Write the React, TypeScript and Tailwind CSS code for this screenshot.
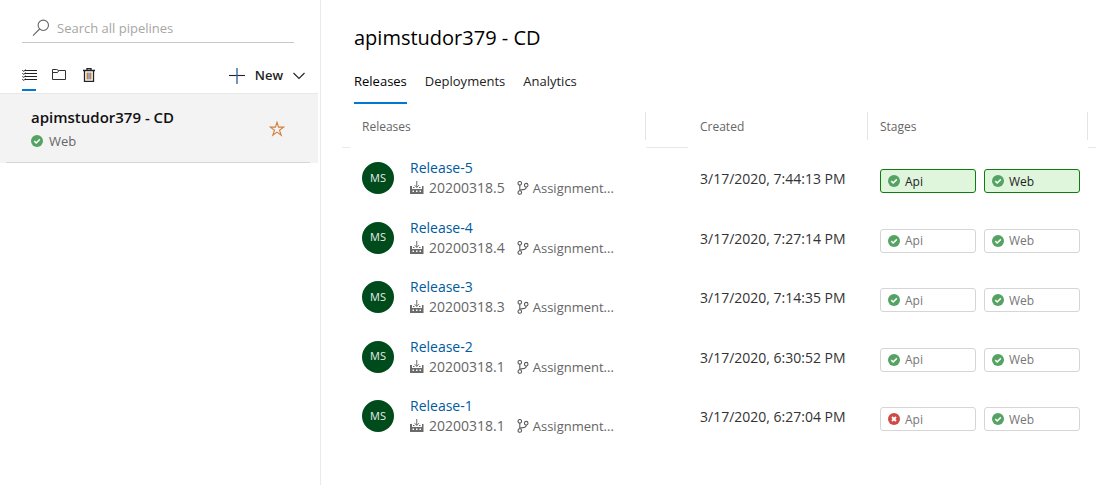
import React from "react";

type Status = "success" | "failed";

const releases: { name: string; build: string; created: string; api: Status; current?: boolean }[] = [
  { name: "Release-5", build: "20200318.5", created: "3/17/2020, 7:44:13 PM", api: "success", current: true },
  { name: "Release-4", build: "20200318.4", created: "3/17/2020, 7:27:14 PM", api: "success" },
  { name: "Release-3", build: "20200318.3", created: "3/17/2020, 7:14:35 PM", api: "success" },
  { name: "Release-2", build: "20200318.1", created: "3/17/2020, 6:30:52 PM", api: "success" },
  { name: "Release-1", build: "20200318.1", created: "3/17/2020, 6:27:04 PM", api: "failed" },
];

function StatusIcon({ status }: { status: Status }) {
  return (
    <svg viewBox="0 0 12 12" className="size-3 shrink-0" fill="none" stroke="#fff" aria-hidden="true">
      <circle cx="6" cy="6" r="6" stroke="none" fill={status === "success" ? "#55a362" : "#cd4a45"} />
      {status === "success" ? (
        <path d="M3.3 6.1 5.2 8 8.8 4.4" strokeWidth="1.5" />
      ) : (
        <path d="m4 4 4 4M8 4 4 8" strokeWidth="1.9" />
      )}
    </svg>
  );
}

function SearchIcon() {
  return (
    <svg viewBox="0 0 18 18" className="size-[18px] shrink-0" fill="none" stroke="#666" strokeWidth="1.1" aria-hidden="true">
      <circle cx="11.3" cy="7.3" r="5.2" />
      <path d="M7.6 11 1 17.6" />
    </svg>
  );
}

function ListIcon() {
  return (
    <svg viewBox="0 0 16 12" className="h-3 w-4" fill="none" stroke="#222" aria-hidden="true">
      <path d="M3 1.5h12M3 4.5h12M3 7.5h12M3 10.5h12" strokeWidth="1.1" />
      <path d="m.3 1.3 1.4 1L4 .7M.3 4.3l1.4 1L4 3.7M.3 7.3l1.4 1L4 6.7M.3 10.3l1.4 1L4 9.7" />
    </svg>
  );
}

function FolderIcon() {
  return (
    <svg viewBox="0 0 16 12" className="h-3 w-4" fill="none" stroke="#333" aria-hidden="true">
      <path d="M1.5 10.5v-10h4.3l1.7 1h7v9zM1.5 3.5h5l1.5-2" />
    </svg>
  );
}

function TrashIcon() {
  return (
    <svg viewBox="0 0 12 14" className="h-3.5 w-3" fill="none" stroke="#222" aria-hidden="true">
      <path d="M0 2.5h12M4 2.5V.5h4v2M1.5 2.5v11h9v-11" strokeWidth="1.3" />
      <path d="M4.2 4.5v7" stroke="#b5651d" strokeWidth="1.2" />
      <path d="M6 4.5v7" stroke="#334a6b" />
      <path d="M7.8 4.5v7" stroke="#b5651d" strokeWidth="1.2" />
    </svg>
  );
}

function PlusIcon() {
  return (
    <svg viewBox="0 0 16 16" className="size-4" fill="none" aria-hidden="true">
      <path d="M0 7.5h16" stroke="#222" strokeWidth="1.1" />
      <path d="M8 0v16" stroke="#36699b" strokeWidth="1.4" />
    </svg>
  );
}

function ChevronIcon() {
  return (
    <svg viewBox="0 0 12 8" className="h-2 w-3" fill="none" stroke="#222" strokeWidth="1.1" aria-hidden="true">
      <path d="m.5 1 5.5 5.5L11.5 1" />
    </svg>
  );
}

function StarIcon() {
  return (
    <svg viewBox="0 0 16 16" className="size-4" fill="none" stroke="#d3803c" strokeWidth="1.1" aria-hidden="true">
      <path d="m8 1.2 1.5 4.9h5.2l-4.2 3.1 1.7 5L8 11.1l-4.2 3.1 1.7-5-4.2-3.1h5.2z" />
    </svg>
  );
}

function BuildIcon() {
  return (
    <svg viewBox="0 0 14 14" className="size-3.5 shrink-0" fill="none" aria-hidden="true">
      <path
        fill="#6b6b6b"
        fillRule="evenodd"
        d="M0 5h2v3h10V5h1.5v8H0zM2.5 9.5V11H4V9.5zm3.5 0V11h1.5V9.5zm3.5 0V11H11V9.5z"
      />
      <path d="M3 6h1.5v1H3zM9 6h1.5v1H9z" fill="#6b6b6b" />
      <path d="M6.75 0v6.4M4.6 4.2l2.15 2.2L8.9 4.2" stroke="#6b6b6b" />
    </svg>
  );
}

function BranchIcon() {
  return (
    <svg viewBox="0 0 12 14" className="h-3.5 w-3 shrink-0" fill="none" stroke="#5c5c5c" strokeWidth="1.1" aria-hidden="true">
      <circle cx="2.8" cy="2.3" r="1.8" />
      <circle cx="2.8" cy="11.5" r="1.8" />
      <circle cx="9.2" cy="4.2" r="1.8" />
      <path d="M2.8 4.1v5.6M9.2 6c0 2-1.7 2.6-3.4 2.6-1.7 0-3 .3-3 1.2" />
    </svg>
  );
}

function Stage({ name, status, current }: { name: string; status: Status; current?: boolean }) {
  return (
    <button
      type="button"
      className={
        current
          ? "flex h-6 w-24 items-center gap-[5px] rounded-[3px] border border-[#107c10] bg-[#dff6dd] px-[7px] text-xs text-[#222]"
          : "flex h-6 w-24 items-center gap-[5px] rounded-[3px] border border-[#d6d6d6] bg-white px-[7px] text-xs text-[#767676]"
      }
    >
      <StatusIcon status={status} />
      <span className="pt-px">{name}</span>
    </button>
  );
}

function HeaderLabel({ children }: { children: string }) {
  return <div className="mb-2 flex h-7 items-center border-r border-[#e4e4e4] pt-0.5 pl-3">{children}</div>;
}

function Sidebar() {
  return (
    <aside className="w-[321px] shrink-0 border-r border-[#eaeaea] pt-3">
      <label className="mr-[26px] ml-[22px] flex h-[31px] items-center gap-[7px] border-b border-[#c8c8c8] pl-2.5">
        <SearchIcon />
        <input
          type="text"
          aria-label="Search all pipelines"
          placeholder="Search all pipelines"
          className="min-w-0 flex-1 pt-1 text-[13px] outline-none placeholder:text-[#a6a6a6]"
        />
      </label>
      <div className="mt-4 mr-[15px] ml-[22px] flex h-8 items-stretch">
        <button type="button" aria-label="List view" className="mr-[15px] flex w-3.5 items-center border-b-2 border-[#0078d4] pt-0.5">
          <span className="shrink-0"><ListIcon /></span>
        </button>
        <button type="button" aria-label="Folders" className="mr-4"><FolderIcon /></button>
        <button type="button" aria-label="Delete"><TrashIcon /></button>
        <button type="button" className="ml-auto flex items-center gap-2.5 pt-px text-[13px] font-semibold text-[#222]">
          <PlusIcon />
          New
          <ChevronIcon />
        </button>
      </div>
      <div className="mt-0.5 mr-0.5 border-t border-[#e8e8e8] bg-[#f3f3f3]">
        <div className="mr-2 ml-1.5 flex h-[69px] items-center justify-between border-b border-[#d6d6d6] pt-0.5 pr-[25px] pl-[25px]">
          <div>
            <a href="#pipeline" className="block text-[15px] leading-6 font-semibold text-[#111]">apimstudor379 - CD</a>
            <div className="flex items-center gap-1.5 text-[13px] leading-6 text-[#666]">
              <StatusIcon status="success" />
              Web
            </div>
          </div>
          <button type="button" aria-label="Add to favorites"><StarIcon /></button>
        </div>
      </div>
    </aside>
  );
}

export default function App() {
  return (
    <div className="flex min-h-screen bg-white font-['Open_Sans','Noto_Sans',sans-serif] text-[#222]">
      <Sidebar />
      <main className="min-w-0 flex-1 pt-[22px] pr-[15px] pl-[21px]">
        <h1 className="pl-3 text-xl leading-8 font-medium text-black">apimstudor379 - CD</h1>
        <nav className="mt-2.5 flex gap-[18px] pl-3 text-[13px]">
          <a href="#releases" aria-current="page" className="h-10 border-b-2 border-[#0078d4] pt-2 font-medium text-black">
            Releases
          </a>
          <a href="#deployments" className="h-10 pt-2">Deployments</a>
          <a href="#analytics" className="h-10 pt-2">Analytics</a>
        </nav>
        <table className="mt-2 w-full table-fixed border-separate border-spacing-0">
          <colgroup>
            <col className="w-2" />
            <col />
            <col className="w-[42px]" />
            <col className="w-[180px]" />
            <col className="w-[220px]" />
            <col className="w-2" />
          </colgroup>
          <thead className="text-left text-xs text-[#666]">
            <tr className="h-9">
              <td className="border-b border-[#e8e8e8]" />
              <th scope="col" className="p-0 font-normal"><HeaderLabel>Releases</HeaderLabel></th>
              <td className="border-b border-[#e8e8e8]" />
              <th scope="col" className="p-0 font-normal"><HeaderLabel>Created</HeaderLabel></th>
              <th scope="col" className="p-0 font-normal"><HeaderLabel>Stages</HeaderLabel></th>
              <td className="border-b border-[#e8e8e8]" />
            </tr>
          </thead>
          <tbody>
            {releases.map((r) => (
              <tr key={r.name} className="odd:h-[60px] even:h-[59px]">
                <td />
                <td className="p-0 pl-3">
                  <div className="flex items-center gap-4">
                    <span className="flex size-8 shrink-0 items-center justify-center rounded-full bg-[#004b1c] text-[11px] text-[#e6eee8]">
                      MS
                    </span>
                    <div>
                      <a href={`#${r.name}`} className="block text-sm leading-5 text-[#005a9e]">{r.name}</a>
                      <div className="flex items-center text-[13px] leading-5 text-[#666]">
                        <BuildIcon />
                        <span className="mr-3 ml-[5px] text-sm leading-5">{r.build}</span>
                        <BranchIcon />
                        <span className="ml-1">Assignment...</span>
                      </div>
                    </div>
                  </div>
                </td>
                <td />
                <td className="p-0 pt-0.5 pl-3 text-sm text-[#333]">{r.created}</td>
                <td className="p-0 pt-1.5 pl-3">
                  <div className="flex gap-2">
                    <Stage name="Api" status={r.api} current={r.current} />
                    <Stage name="Web" status="success" current={r.current} />
                  </div>
                </td>
                <td />
              </tr>
            ))}
          </tbody>
        </table>
      </main>
    </div>
  );
}
